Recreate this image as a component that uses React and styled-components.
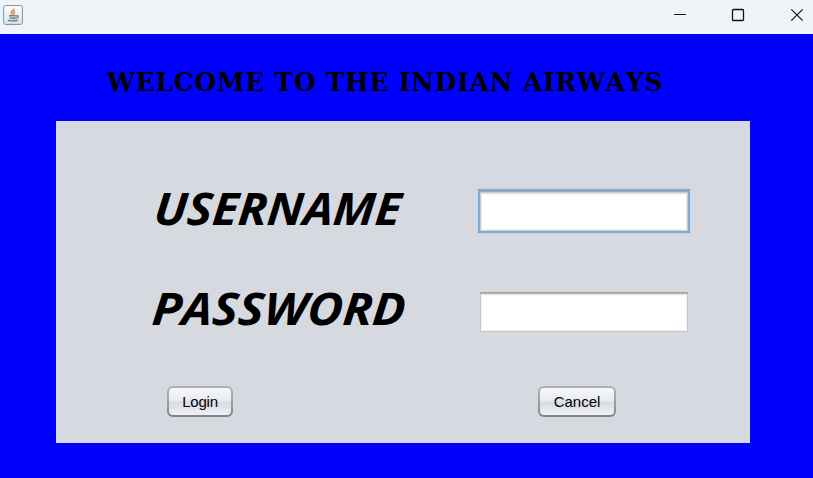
import React from "react";
import styled, { createGlobalStyle } from "styled-components";

const GlobalStyle = createGlobalStyle`
  * { box-sizing: border-box; }
  body { margin: 0; overflow: hidden; }
`;

const Window = styled.div`
  width: 813px;
  height: 478px;
  display: flex;
  flex-direction: column;
  background: #0000ff;
  color: #000;
`;

const TitleBar = styled.header`
  height: 34px;
  flex: none;
  display: flex;
  justify-content: space-between;
  background: #eff4f9;
`;

const JavaIcon = styled.svg`
  width: 20px;
  height: 20px;
  margin: 5px 0 0 3px;
`;

const Controls = styled.div`
  display: flex;
  gap: 47px;
  padding: 9px 10px 0 0;
`;

const ControlIcon = styled.svg`
  width: 12px;
  height: 12px;
  fill: none;
  stroke: #111;
  overflow: visible;
`;

const Heading = styled.h1`
  height: 87px;
  flex: none;
  margin: 0;
  padding: 31px 0 0 107px;
  font: bold 26px/34px "DejaVu Serif Condensed", "DejaVu Serif", serif;
  font-kerning: none;
  white-space: nowrap;
  letter-spacing: 0.8px;
`;

const HeadingText = styled.span`
  display: inline-block;
  transform: scaleX(1.062);
  transform-origin: 0 0;
`;

const Panel = styled.form`
  width: 694px;
  height: 322px;
  margin-left: 56px;
  padding-top: 60px;
  background: #d6d9e0;
`;

const Row = styled.div`
  height: 60px;
  margin-bottom: ${(p) => p.$gap}px;
  padding: 0 60px 0 ${(p) => p.$inset}px;
  display: flex;
  justify-content: space-between;
  align-items: center;
`;

const Label = styled.label`
  display: block;
  width: 256px;
  height: 60px;
  font: italic bold 45px/${(p) => p.$line}px "Open Sans", sans-serif;
  white-space: nowrap;
  transform: skewX(-5deg) scaleX(${(p) => p.$stretch});
  transform-origin: 0 44px;
`;

const Field = styled.input`
  width: 212px;
  height: 44px;
  padding: 0 8px;
  outline: none;
  border-radius: 0;
  font: 15px "Liberation Sans", sans-serif;
  background: #fff;
  border: 2px solid transparent;
  background-clip: padding-box;
  border-color: ${(p) => (p.$active ? "#7dabd4" : "transparent")};
  box-shadow: ${(p) =>
    p.$active
      ? "inset 0 1px #a5aaaf, inset 0 2px #c9c9c9, inset 1px 0 #c3c8ce, inset -1px 0 #c3c8ce, inset 0 -1px #d0d4d8, inset 0 3px #e6e6e6, inset 0 4px #f5f5f5, inset 0 0 0 2px #eeeff0, 0 0 0 1px #bdcbdc66"
      : "inset 0 1px #9fa0a3, inset 0 2px #b5b5b5, inset 1px 0 #c4c6cb, inset -1px 0 #c4c6cb, inset 0 -1px #c4c6cb, inset 0 3px #e6e6e6, inset 0 4px #f5f5f5, inset 0 0 0 2px #f2f2f3"};
`;

const Actions = styled.div`
  display: flex;
  justify-content: space-between;
  padding: 5px 134px 0 111px;
`;

const Button = styled.button`
  width: ${(p) => p.$width}px;
  height: 31px;
  padding: 1px 0 0;
  border: 2px solid transparent;
  border-radius: 6px;
  background:
    linear-gradient(#f8f9fb, #e9ebef 45%, #d8dbe2 55%, #eef1f7) padding-box,
    linear-gradient(#aeb1b7, #9b9da2 60%, #7e8084) border-box;
  color: #000;
  font: 15px/20px "Liberation Sans", Arial, sans-serif;
  letter-spacing: ${(p) => p.$tracking || 0}px;
`;

export default function App() {
  return (
    <>
      <GlobalStyle />
      <Window>
        <TitleBar>
          <JavaIcon viewBox="0 0 20 20">
            <defs>
              <linearGradient id="tile" x1="0" y1="0" x2="0" y2="1">
                <stop offset="0" stopColor="#ffffff" />
                <stop offset="1" stopColor="#dfe2e5" />
              </linearGradient>
            </defs>
            <rect x=".6" y=".6" width="18.8" height="18.8" rx="2" fill="url(#tile)" stroke="#7f929e" />
            <path d="M10.8 3.4c.6 2-3 2.700-2.300 4.700.2.700.9 1 .9 1.700M12 6.300c-2 1-.8 2-1.300 3.200" fill="none" stroke="#e8914f" strokeWidth="1.900" />
            <path d="M6 10.800h7.500M6.800 12.800c1.500.5 4.500.5 6 0M13.500 10.700c2.600-.4 2 1.900-.2 2.300M4.800 15.300c2.500.8 8 .8 10-.3" fill="none" stroke="#6689a0" strokeWidth="1.500" />
          </JavaIcon>
          <Controls>
            <ControlIcon viewBox="0 0 12 12"><path d="M1 5.500h12" /></ControlIcon>
            <ControlIcon viewBox="0 0 12 12"><rect x=".5" y=".5" width="11" height="11" rx="1" strokeWidth="1.300" /></ControlIcon>
            <ControlIcon viewBox="0 0 12 12"><path d="M.3.300l11.400 11.400M11.700.300L.3 11.700" strokeWidth="1.200" /></ControlIcon>
          </Controls>
        </TitleBar>
        <Heading><HeadingText>WELCOME TO THE INDIAN AIRWAYS</HeadingText></Heading>
        <Panel onSubmit={(e) => e.preventDefault()}>
          <Row $gap={41} $inset={97}>
            <Label htmlFor="username" $stretch={1.06} $line={53}>USERNAME</Label>
            <Field id="username" $active />
          </Row>
          <Row $gap={39} $inset={95}>
            <Label htmlFor="password" $stretch={1.08} $line={51}>PASSWORD</Label>
            <Field id="password" type="password" />
          </Row>
          <Actions>
            <Button $width={66} $tracking={-0.2} type="submit">Login</Button>
            <Button $width={78} type="button">Cancel</Button>
          </Actions>
        </Panel>
      </Window>
    </>
  );
}
